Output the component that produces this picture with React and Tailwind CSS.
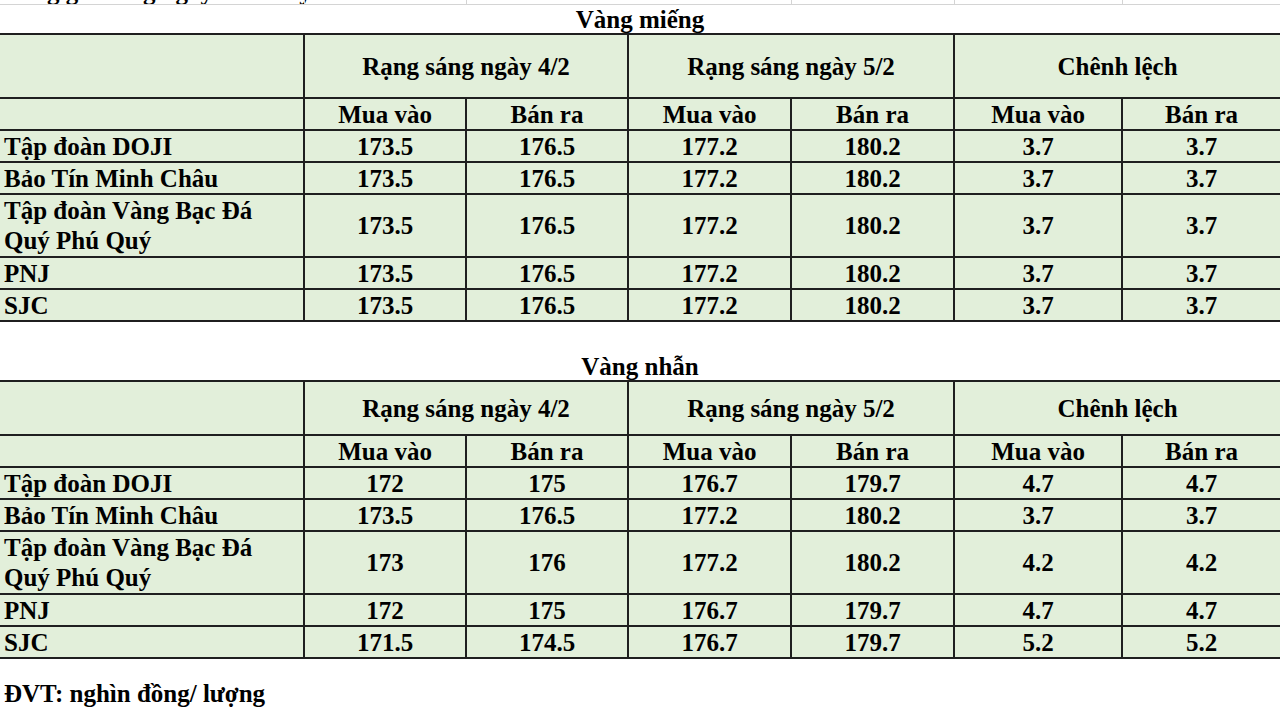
const COLS = [304, 162, 162, 163, 163, 168, 158];

const VANG_MIENG = [
  { ten: ["Tập đoàn DOJI"], v: ["173.5", "176.5", "177.2", "180.2", "3.7", "3.7"] },
  { ten: ["Bảo Tín Minh Châu"], v: ["173.5", "176.5", "177.2", "180.2", "3.7", "3.7"] },
  { ten: ["Tập đoàn Vàng Bạc Đá", "Quý Phú Quý"], v: ["173.5", "176.5", "177.2", "180.2", "3.7", "3.7"] },
  { ten: ["PNJ"], v: ["173.5", "176.5", "177.2", "180.2", "3.7", "3.7"] },
  { ten: ["SJC"], v: ["173.5", "176.5", "177.2", "180.2", "3.7", "3.7"] },
];

const VANG_NHAN = [
  { ten: ["Tập đoàn DOJI"], v: ["172", "175", "176.7", "179.7", "4.7", "4.7"] },
  { ten: ["Bảo Tín Minh Châu"], v: ["173.5", "176.5", "177.2", "180.2", "3.7", "3.7"] },
  { ten: ["Tập đoàn Vàng Bạc Đá", "Quý Phú Quý"], v: ["173", "176", "177.2", "180.2", "4.2", "4.2"] },
  { ten: ["PNJ"], v: ["172", "175", "176.7", "179.7", "4.7", "4.7"] },
  { ten: ["SJC"], v: ["171.5", "174.5", "176.7", "179.7", "5.2", "5.2"] },
];

const cell = "border-2 border-[#1f1f1f] p-0 align-middle";

function BangGia({ rows, headH }) {
  return (
    <table className="table-fixed border-collapse w-[1280px] bg-[#e2efda] border-l-0">
      <colgroup>
        {COLS.map((w, i) => (
          <col key={i} style={{ width: w }} />
        ))}
      </colgroup>
      <tbody>
        <tr className={headH}>
          <td className={`${cell} border-l-0`}></td>
          <td colSpan={2} className={`${cell} text-center`}>Rạng sáng ngày 4/2</td>
          <td colSpan={2} className={`${cell} text-center`}>Rạng sáng ngày 5/2</td>
          <td colSpan={2} className={`${cell} text-center border-r-0`}>Chênh lệch</td>
        </tr>
        <tr className="h-[32px]">
          <td className={`${cell} border-l-0`}></td>
          <td className={`${cell} text-center`}>Mua vào</td>
          <td className={`${cell} text-center`}>Bán ra</td>
          <td className={`${cell} text-center`}>Mua vào</td>
          <td className={`${cell} text-center`}>Bán ra</td>
          <td className={`${cell} text-center`}>Mua vào</td>
          <td className={`${cell} text-center border-r-0`}>Bán ra</td>
        </tr>
        {rows.map((r, i) => (
          <tr key={i} className={r.ten.length > 1 ? "h-[63px]" : "h-[32px]"}>
            <td className={`${cell} border-l-0 pl-[4px] text-left ${r.ten.length > 1 ? "leading-[30px]" : ""}`}>
              {r.ten.map((t) => (
                <div key={t}>{t}</div>
              ))}
            </td>
            {r.v.map((x, j) => (
              <td key={j} className={`${cell} text-center ${j === 5 ? "border-r-0" : ""}`}>
                {x}
              </td>
            ))}
          </tr>
        ))}
      </tbody>
    </table>
  );
}

export default function App() {
  return (
    <div className="w-[1280px] h-[711px] overflow-hidden bg-white text-black font-bold text-[25px] leading-[25px] font-['Liberation_Serif','Times_New_Roman',serif]">
      {/* dòng bị cắt phía trên */}
      <div className="relative h-[5px] overflow-hidden border-b border-[#d4d4d4]">
        <div className="absolute left-[304px] top-0 h-full border-l border-[#d4d4d4]"></div>
        <div className="absolute left-[466px] top-0 h-full border-l border-[#d4d4d4]"></div>
        <div className="absolute left-[791px] top-0 h-full border-l border-[#d4d4d4]"></div>
        <div className="absolute left-[954px] top-0 h-full border-l border-[#d4d4d4]"></div>
        <div className="absolute left-[1122px] top-0 h-full border-l border-[#d4d4d4]"></div>
        <div className="mt-[-21px] pl-[4px] whitespace-nowrap">Bảng giá vàng ngày hôm nay</div>
      </div>

      <div className="h-[28px] flex items-end justify-center pb-[1px]">Vàng miếng</div>
      <BangGia rows={VANG_MIENG} headH="h-[64px]" />

      <div className="h-[30px]"></div>
      <div className="h-[28px] flex items-end justify-center pb-[1px]">Vàng nhẫn</div>
      <BangGia rows={VANG_NHAN} headH="h-[54px]" />

      <div className="h-[22px]"></div>
      <div className="pl-[4px] whitespace-nowrap">ĐVT: nghìn đồng/ lượng</div>
    </div>
  );
}
